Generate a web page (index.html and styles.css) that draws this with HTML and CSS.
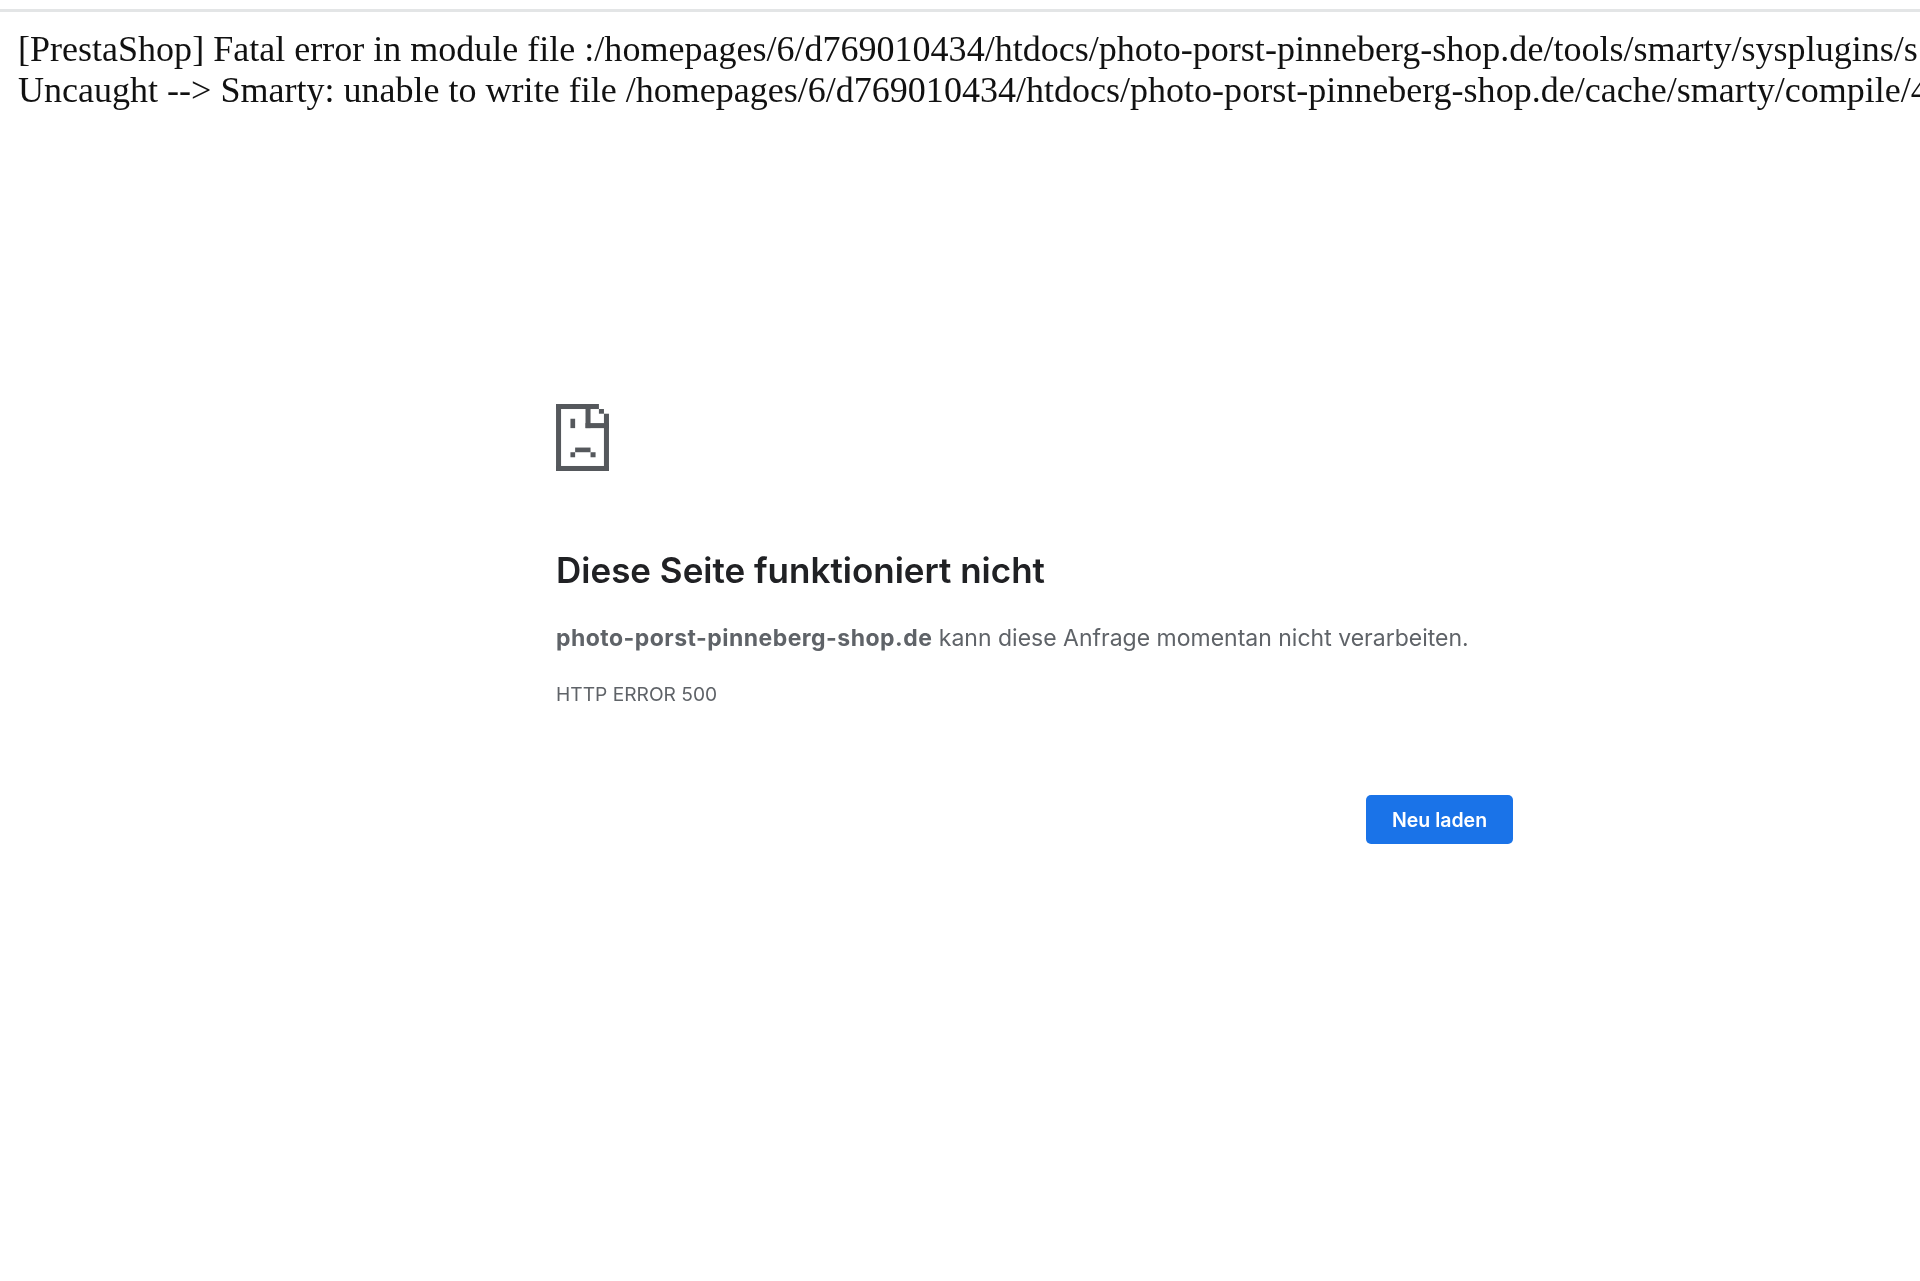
FILE: index.html
```html
<!DOCTYPE html>
<html lang="de">
<head>
<meta charset="utf-8">
<title>photo-porst-pinneberg-shop.de</title>
<link rel="stylesheet" href="styles.css">
</head>
<body>
<div class="top-rule"></div>
<div class="fatal">[PrestaShop] Fatal error in module file :/homepages/6/d769010434/htdocs/photo-porst-pinneberg-shop.de/tools/smarty/sysplugins/s<br>Uncaught --&gt; Smarty: unable to write file /homepages/6/d769010434/htdocs/photo-porst-pinneberg-shop.de/cache/smarty/compile/4</div>
<main class="error">
  <svg class="sad-page" viewBox="47 43 158 200" width="53" height="67" aria-hidden="true">
    <g fill="#55585c">
      <rect x="47" y="43" width="128" height="15"/>
      <rect x="47" y="43" width="15" height="200"/>
      <rect x="47" y="228" width="158" height="15"/>
      <rect x="190" y="72" width="15" height="171"/>
      <rect x="135" y="43" width="15" height="72"/>
      <rect x="135" y="100" width="70" height="15"/>
      <rect x="175" y="58" width="15" height="14"/>
      <rect x="90" y="87" width="14" height="28"/>
      <rect x="104" y="173" width="46" height="14"/>
      <rect x="90" y="187" width="14" height="15"/>
      <rect x="150" y="187" width="15" height="15"/>
    </g>
  </svg>
  <h1 class="title">Diese Seite funktioniert nicht</h1>
  <p class="message"><strong>photo-porst-pinneberg-shop.de</strong> kann diese Anfrage momentan nicht verarbeiten.</p>
  <p class="code">HTTP ERROR 500</p>
  <div class="actions"><button class="reload" type="button">Neu laden</button></div>
</main>
</body>
</html>
```
FILE: styles.css
```css
html, body {
  margin: 0;
  height: 100%;
  background: #fff;
  overflow: hidden;
}
.top-rule {
  height: 3px;
  margin-top: 9px;
  background: #e3e5e6;
}
.fatal {
  margin: 17px 0 0 18px;
  font-family: "Liberation Serif", serif;
  font-size: 36.04px;
  line-height: 41px;
  color: #111;
  white-space: nowrap;
  filter: blur(0.5px);
}
.error {
  width: 957px;
  margin: 293px 0 0 556px;
  font-family: Inter, sans-serif;
  filter: blur(0.4px);
}
.sad-page {
  display: block;
}
.title {
  margin: 78px 0 0;
  font-size: 35px;
  line-height: 42px;
  font-weight: 600;
  color: #202124;
}
.message {
  margin: 32px 0 0;
  font-size: 23px;
  line-height: 30px;
  color: #5f6368;
}
.message strong {
  font-weight: 700;
  letter-spacing: 0.47px;
}
.code {
  margin: 28px 0 0;
  font-size: 19.2px;
  line-height: 26px;
  color: #5f6368;
}
.actions {
  display: flex;
  justify-content: flex-end;
  margin-top: 88px;
}
.reload {
  width: 147px;
  height: 49px;
  padding: 0;
  border: 0;
  border-radius: 5px;
  background: #1a73e8;
  color: #fff;
  font-family: Inter, sans-serif;
  font-size: 19.5px;
  font-weight: 600;
}
```
